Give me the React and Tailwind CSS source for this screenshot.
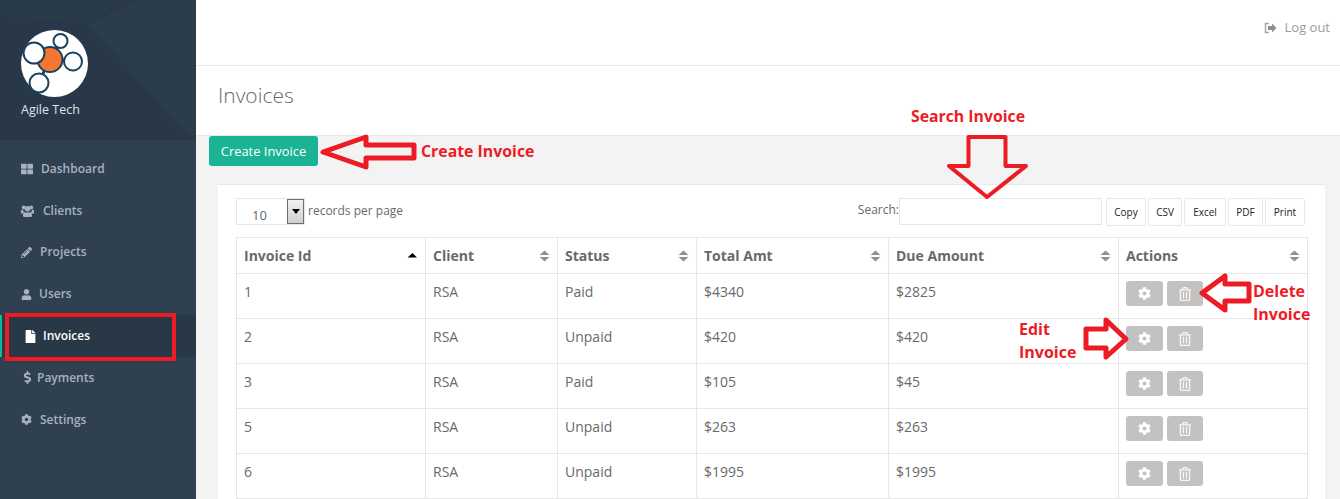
import { FaThLarge, FaPencilAlt, FaUser, FaFile, FaDollarSign, FaCog, FaRegTrashAlt } from 'react-icons/fa';

const ClientsIcon = () => (
  <svg width="13" height="12" viewBox="0 0 13 12" fill="currentColor">
    <circle cx="2.8" cy="2.6" r="2" />
    <circle cx="10.2" cy="2.6" r="2" />
    <circle cx="6.5" cy="3.8" r="2.7" />
    <path d="M0 5.5 C0 4.8 1 4.6 2 5.2 C2.4 6.2 2.8 6.8 3.2 7.2 C2.4 7.6 1.8 8 1.4 8.8 C0.4 8.6 0 8 0 7.2 Z" />
    <path d="M13 5.5 C13 4.8 12 4.6 11 5.2 C10.6 6.2 10.2 6.8 9.8 7.2 C10.6 7.6 11.2 8 11.6 8.8 C12.6 8.6 13 8 13 7.2 Z" />
    <path d="M3.4 7 C4.4 7.8 8.6 7.8 9.6 7 C10.6 7.4 11 9 11 10.4 C11 11.4 10.4 12 9.6 12 H3.4 C2.6 12 2 11.4 2 10.4 C2 9 2.4 7.4 3.4 7 Z" />
  </svg>
);

const navItems = [
  { label: 'Dashboard', icon: <FaThLarge size={12} />, box: 'w-[20px]' },
  { label: 'Clients', icon: <ClientsIcon />, box: 'w-[22px]' },
  { label: 'Projects', icon: <FaPencilAlt size={11} />, box: 'w-[19px]' },
  { label: 'Users', icon: <FaUser size={11} />, box: 'w-[18px]' },
  { label: 'Invoices', icon: <FaFile size={13} />, box: 'w-[22px] pl-[3px]', active: true },
  { label: 'Payments', icon: <FaDollarSign size={13} />, box: 'w-[16px]' },
  { label: 'Settings', icon: <FaCog size={11} />, box: 'w-[19px]' },
];

const rows = [
  ['1', 'RSA', 'Paid', '$4340', '$2825'],
  ['2', 'RSA', 'Unpaid', '$420', '$420'],
  ['3', 'RSA', 'Paid', '$105', '$45'],
  ['5', 'RSA', 'Unpaid', '$263', '$263'],
  ['6', 'RSA', 'Unpaid', '$1995', '$1995'],
];

const columns = [
  { label: 'Invoice Id', width: 'w-[189px]', sorted: true },
  { label: 'Client', width: 'w-[132px]' },
  { label: 'Status', width: 'w-[139px]' },
  { label: 'Total Amt', width: 'w-[192px]' },
  { label: 'Due Amount', width: 'w-[230px]' },
  { label: 'Actions', width: 'w-[189px]' },
];

const exportButtons = [
  { label: 'Copy', width: 'w-[40px]' },
  { label: 'CSV', width: 'w-[34px]' },
  { label: 'Excel', width: 'w-[42px]' },
  { label: 'PDF', width: 'w-[35px]' },
  { label: 'Print', width: 'w-[40px]' },
];

const SortIcon = ({ sorted }) => (
  <svg width="11" height="12" viewBox="0 0 11 12" className="shrink-0">
    {sorted ? (
      <path d="M0.5 7.5 L5.5 3 L10 7.5 Z" fill="#000" />
    ) : (
      <>
        <path d="M0.5 5 L5.5 0.5 L10.5 5 Z" fill="#8f9194" />
        <path d="M0.5 7 L10.5 7 L5.5 11.5 Z" fill="#8f9194" />
      </>
    )}
  </svg>
);

const Logo = () => (
  <svg width="67" height="67" viewBox="0 0 67 67">
    <circle cx="33.5" cy="33.5" r="33.5" fill="#fff" />
    <g stroke="#17435f" strokeWidth="2">
      <path d="M34 20 L38 16 M40 30 L46 31 M24 39 L21 46" strokeWidth="3" />
      <circle cx="29" cy="29.5" r="12.5" fill="#f47630" />
      <circle cx="13" cy="23" r="10.5" fill="#fff" />
      <circle cx="39.5" cy="11" r="7" fill="#fff" />
      <circle cx="52" cy="31.5" r="9" fill="#fff" />
      <circle cx="18" cy="53" r="9.5" fill="#fff" />
    </g>
  </svg>
);

const Sidebar = () => (
  <aside className="w-[196px] shrink-0 bg-[#2f4050] text-[12px] font-semibold">
    <div className="relative h-[140px] overflow-hidden bg-[#283848] pl-[21px] pt-[30px]">
      <svg width="196" height="140" viewBox="0 0 196 140" className="absolute left-0 top-0">
        <path d="M88 24 L140 0 L196 0 L196 140 L176 122 Z" fill="#2b3c4b" />
        <path d="M0 0 L120 0 L88 24 L0 16 Z" fill="#293a49" />
      </svg>
      <div className="relative">
        <Logo />
        <div className="mt-[4px] text-[12.5px] font-normal leading-[18px] text-[#dfe4ed]">Agile Tech</div>
      </div>
    </div>
    <nav className="pt-[8px]">
      {navItems.map(({ label, icon, box, active }) => (
        <div
          key={label}
          className={`flex h-[41.8px] items-center border-l-2 pl-[19px] ${
            active ? 'border-[#1ab394] bg-[#293846] text-white' : 'border-transparent text-[#a7b1c2]'
          }`}
        >
          <span className={`flex ${box}`}>{icon}</span>
          <span>{label}</span>
        </div>
      ))}
    </nav>
  </aside>
);

const InvoiceTable = () => (
  <table className="w-[1071px] table-fixed border-collapse text-[14px] text-[#676a6c]">
    <thead>
      <tr className="h-[36px]">
        {columns.map((col) => (
          <th key={col.label} className={`${col.width} border border-[#e7e7e7] px-[7px] text-left font-bold`}>
            <div className="flex items-center justify-between">
              {col.label}
              <SortIcon sorted={col.sorted} />
            </div>
          </th>
        ))}
      </tr>
    </thead>
    <tbody>
      {rows.map((row) => (
        <tr key={row[0]} className="h-[45px]">
          {row.map((cell, i) => (
            <td key={i} className="border border-[#e7e7e7] px-[7px] pb-[9px] align-middle">
              <span className="relative">{cell}</span>
            </td>
          ))}
          <td className="border border-[#e7e7e7] px-[7px] pb-[5px]">
            <div className="flex gap-[4px]">
              <button className="flex h-[25px] w-[37px] items-center justify-center rounded-[3px] bg-[#c2c2c2] text-white">
                <FaCog size={13} />
              </button>
              <button className="flex h-[25px] w-[36px] items-center justify-center rounded-[3px] bg-[#c2c2c2] text-[#fbf5ea]">
                <FaRegTrashAlt size={14} />
              </button>
            </div>
          </td>
        </tr>
      ))}
    </tbody>
  </table>
);

const Annotations = () => (
  <>
    <svg width="1340" height="499" viewBox="0 0 1340 499" className="pointer-events-none absolute left-0 top-0">
      <g fill="none" stroke="#ed1c24" strokeWidth="4" strokeLinejoin="round">
        <path d="M323 152 L366 137 L366 145 L414 145 L414 158 L366 158 L366 167 Z" strokeWidth="5" />
        <path d="M968.5 137 L1005.5 137 L1005.5 166 L1026 166 L987 197 L949 166 L968.5 166 Z" />
        <path d="M1202 293 L1225 276 L1225 284 L1249 284 L1249 301 L1225 301 L1225 310 Z" strokeWidth="5" />
        <path d="M1086 329 L1106 329 L1106 320 L1126 339 L1106 357 L1106 348 L1086 348 Z" strokeWidth="5" />
      </g>
    </svg>
    <div className="pointer-events-none absolute left-[5px] top-[313px] h-[48px] w-[171px] border-[4px] border-[#ed1c24]" />
    <div className="absolute left-[421px] top-[140px] text-[15.85px] font-bold leading-[22px] text-[#ed1c24]">Create Invoice</div>
    <div className="absolute left-[911px] top-[105px] text-[15.8px] font-bold leading-[22px] text-[#ed1c24]">Search Invoice</div>
    <div className="absolute left-[1253px] top-[280px] text-[16px] font-bold leading-[23px] text-[#ed1c24]">
      Delete
      <br />
      Invoice
    </div>
    <div className="absolute left-[1019px] top-[318px] text-[16px] font-bold leading-[23px] text-[#ed1c24]">
      Edit
      <br />
      Invoice
    </div>
  </>
);

export default function App() {
  return (
    <div className="relative flex h-[499px] w-[1340px] overflow-hidden bg-[#f3f3f4] font-['Open_Sans',sans-serif]">
      <Sidebar />
      <main className="flex-1">
        <header className="flex h-[66px] items-start justify-end border-b border-[#e7eaec] bg-white pr-[10px] pt-[18px] text-[13px] text-[#999c9e]">
          <div className="flex items-center gap-[8px]">
            <svg width="13" height="12" viewBox="0 0 13 12">
              <path d="M5 1.5 H1.5 V10.5 H5" fill="none" stroke="#a8a8a8" strokeWidth="1.5" />
              <path d="M4 4 H8 V1.5 L12.5 6 L8 10.5 V8 H4 Z" fill="#8f8f8f" />
            </svg>
            <span>Log out</span>
          </div>
        </header>
        <div className="flex h-[70px] items-center border-b border-[#e7eaec] bg-white pl-[22px] pb-[9px]">
          <h2 className="text-[21px] font-light text-[#676a6c]">Invoices</h2>
        </div>
        <div className="pl-[13px]">
          <button className="h-[30px] w-[109px] rounded-[3px] bg-[#1ab394] pt-[2px] text-[12.9px] text-white">Create Invoice</button>
        </div>
        <section className="ml-[22px] mt-[18px] h-[400px] w-[1107px] border-t border-[#e7eaec] bg-white pl-[18px] pt-[13px]">
          <div className="flex h-[39px] items-start justify-between pr-[20px] text-[12px] text-[#676a6c]">
            <div className="flex items-center">
              <div className="relative h-[27px] w-[69px] border border-[#e5e6e7] bg-white">
                <span className="absolute left-[15px] top-[7px] text-[13px] text-[#676a6c]">10</span>
                <span className="absolute right-0 top-0 flex h-[25px] w-[17px] items-center justify-center border border-[#707070] bg-gradient-to-b from-[#f2f2f2] to-[#cfcfcf]">
                  <svg width="8" height="5" viewBox="0 0 8 5">
                    <path d="M0 0 H8 L4 5 Z" fill="#000" />
                  </svg>
                </span>
              </div>
              <span className="ml-[3px] pb-[1px]">records per page</span>
            </div>
            <div className="flex items-start">
              <span className="pt-[3px]">Search:</span>
              <div className="h-[27px] w-[203px] border border-[#e5e6e7] bg-white" />
              <div className="ml-[4px] flex gap-[2px]">
                {exportButtons.map((btn) => (
                  <button
                    key={btn.label}
                    className={`h-[28px] ${btn.width} rounded-[2px] border border-[#e7eaec] bg-white text-[10px] text-[#222]`}
                  >
                    {btn.label}
                  </button>
                ))}
              </div>
            </div>
          </div>
          <InvoiceTable />
        </section>
      </main>
      <Annotations />
    </div>
  );
}
